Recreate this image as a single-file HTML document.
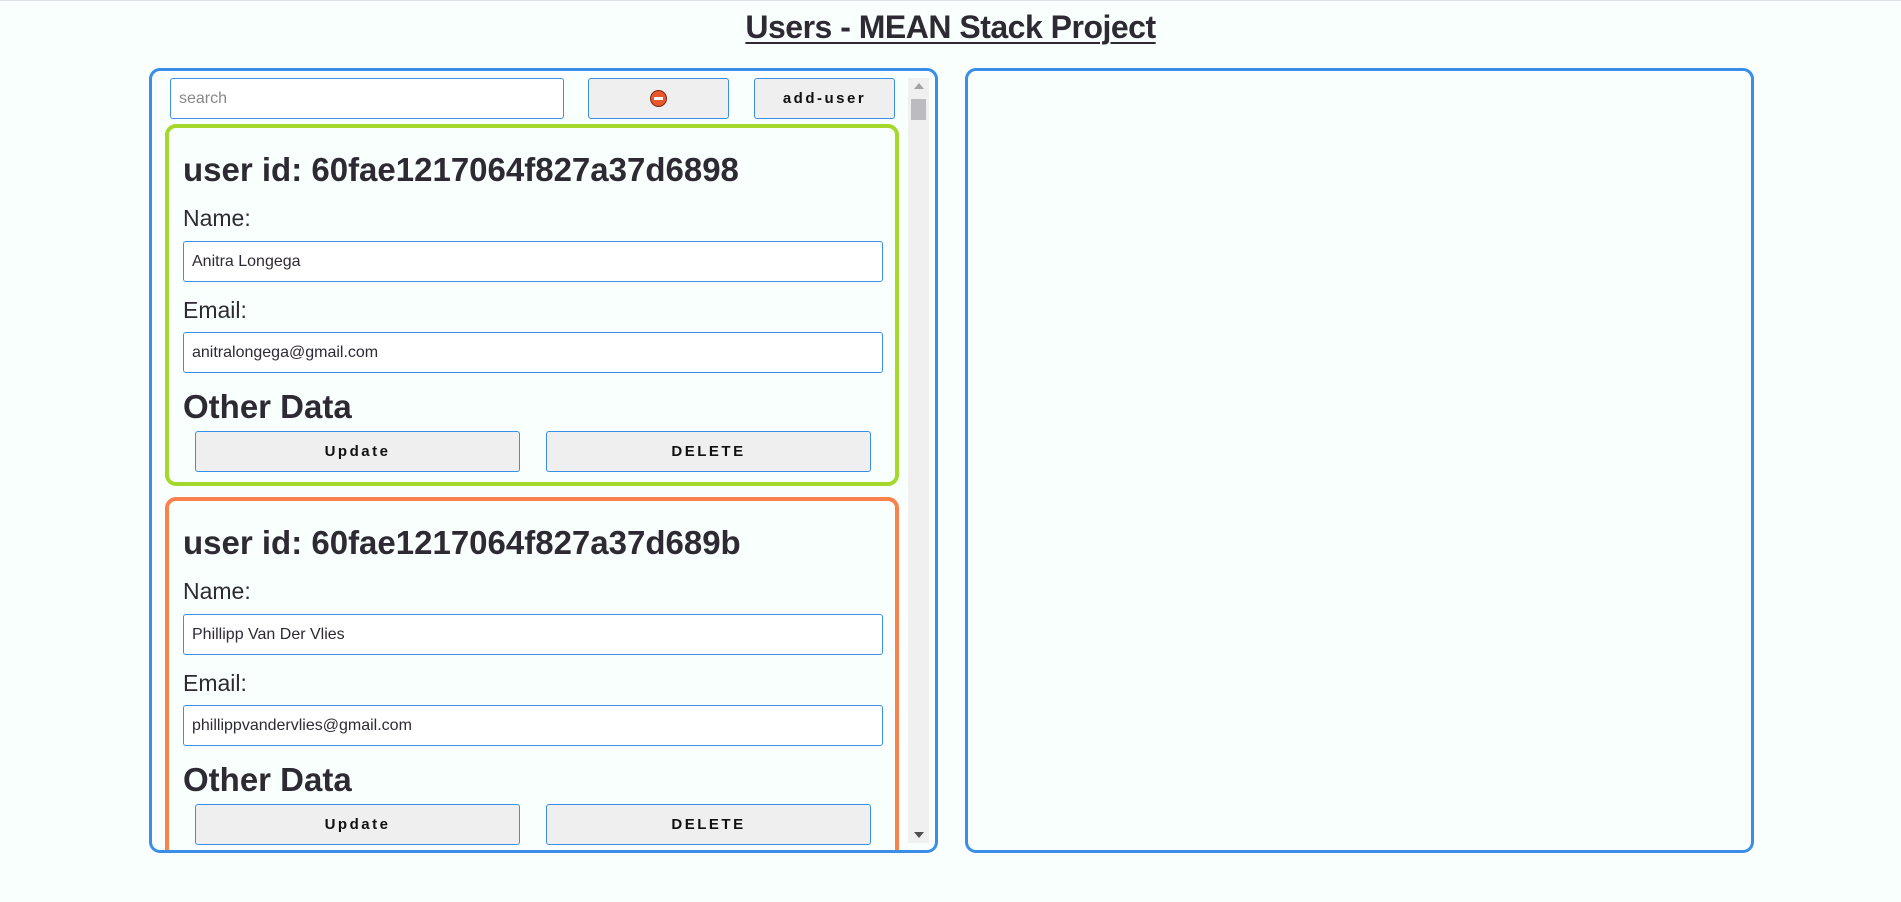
<!DOCTYPE html>
<html><head><meta charset="utf-8"><style>
*{box-sizing:border-box;margin:0;padding:0}
body{width:1901px;height:902px;background:#f8fffc;font-family:"Liberation Sans",sans-serif;color:#2e2a33;position:relative;overflow:hidden;border-top:1px solid #dde2e6}
.a{position:absolute}
h1{position:absolute;left:0;width:1901px;top:8px;text-align:center;font-size:32px;font-weight:bold;text-decoration:underline;text-decoration-thickness:2px;text-underline-offset:4px;letter-spacing:-0.5px}
.panel{border:3px solid #3b8ee6;border-radius:11px}
.inp{position:absolute;border:1px solid #3b8ee6;border-radius:3px;background:#fff;font-size:16px;padding-left:8px;display:flex;align-items:center}
.btn{position:absolute;border:1px solid #3b8ee6;border-radius:3px;background:#efefef;font-size:15px;letter-spacing:2.5px;display:flex;align-items:center;justify-content:center;color:#111;font-weight:bold}
.card{position:absolute;left:13px;width:734px;height:362px;border:4px solid;border-radius:11px}
.card .id{position:absolute;left:14px;top:23px;font-size:33px;letter-spacing:0;font-weight:bold}
.card .lb{position:absolute;left:14px;font-size:23px}
.card .od{position:absolute;left:14px;top:260px;font-size:33px;font-weight:bold;letter-spacing:0}
</style></head><body>
<h1>Users - MEAN Stack Project</h1>
<div class="a panel" style="left:149px;top:67px;width:789px;height:785px;overflow:hidden">
 <div class="inp" style="left:18px;top:7px;width:394px;height:41px;color:#888">search</div>
 <div class="btn" style="left:436px;top:7px;width:141px;height:41px"><span style="display:inline-block;width:17px;height:17px;border-radius:50%;background:#e8582c;border:1px solid #7a2a10;position:relative"><span style="position:absolute;left:3px;top:6px;width:9px;height:3px;background:#fff"></span></span></div>
 <div class="btn" style="left:602px;top:7px;width:141px;height:41px">add-user</div>
 <div class="a" style="left:756px;top:7px;width:21px;height:765px;background:#f0f0f0">
  <div class="a" style="left:6px;top:5px;width:0;height:0;border-left:5px solid transparent;border-right:5px solid transparent;border-bottom:6px solid #a3a3a3"></div>
  <div class="a" style="left:3px;top:21px;width:15px;height:21px;background:#bcbcc0"></div>
  <div class="a" style="left:6px;bottom:5px;width:0;height:0;border-left:5px solid transparent;border-right:5px solid transparent;border-top:6px solid #505050"></div>
 </div>
 <div class="card" style="top:53px;border-color:#a4d82a">
  <div class="id">user id: 60fae1217064f827a37d6898</div>
  <div class="lb" style="top:77px">Name:</div>
  <div class="inp" style="left:14px;top:113px;width:700px;height:41px">Anitra Longega</div>
  <div class="lb" style="top:169px">Email:</div>
  <div class="inp" style="left:14px;top:204px;width:700px;height:41px">anitralongega@gmail.com</div>
  <div class="od">Other Data</div>
  <div class="btn" style="left:26px;top:303px;width:325px;height:41px">Update</div>
  <div class="btn" style="left:377px;top:303px;width:325px;height:41px">DELETE</div>
 </div>
 <div class="card" style="top:426px;border-color:#fb824c;height:400px">
  <div class="id">user id: 60fae1217064f827a37d689b</div>
  <div class="lb" style="top:77px">Name:</div>
  <div class="inp" style="left:14px;top:113px;width:700px;height:41px">Phillipp Van Der Vlies</div>
  <div class="lb" style="top:169px">Email:</div>
  <div class="inp" style="left:14px;top:204px;width:700px;height:41px">phillippvandervlies@gmail.com</div>
  <div class="od">Other Data</div>
  <div class="btn" style="left:26px;top:303px;width:325px;height:41px">Update</div>
  <div class="btn" style="left:377px;top:303px;width:325px;height:41px">DELETE</div>
 </div>
</div>
<div class="a panel" style="left:965px;top:67px;width:789px;height:785px"></div>
</body></html>
